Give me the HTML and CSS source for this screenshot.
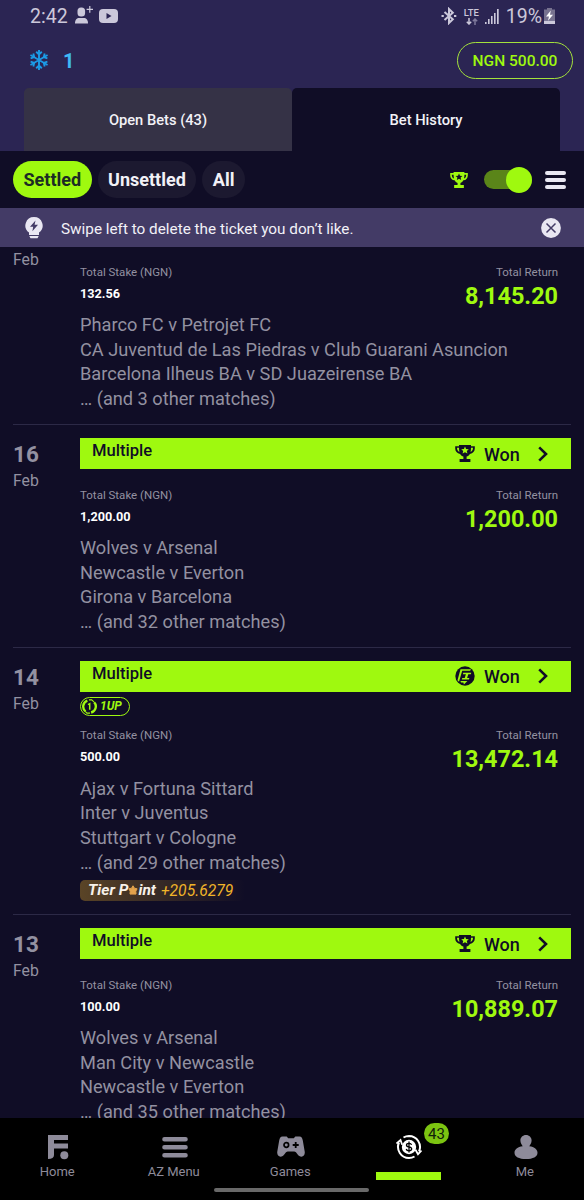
FILE: index.html
```html
<!DOCTYPE html>
<html lang="en">
  <head>
    <meta charset="UTF-8" />
    <meta name="viewport" content="width=device-width, initial-scale=1.0" />
    <title>Bet History</title>
    <link rel="stylesheet" href="styles.css">
  </head>
  <body>
    <!-- shared icons -->
    <svg class="sprite">
      <symbol id="trophy" viewBox="0 0 20 18" preserveAspectRatio="none">
        <path fill="currentColor" fill-rule="evenodd" d="M4 0h12v1.200h3.800v2.600c0 3-1.900 5.200-4.900 5.600-.9 1.600-2 2.400-3.300 2.900v2.400h3.800V18H4.600v-3.300h3.800v-2.400C7.100 11.800 6 11 5.100 9.400 2.100 9 .2 6.800.2 3.800V1.200H4zM4 3H2c0 2.100.8 3.700 2.400 4.300C4.100 6.100 4 4.400 4 3zM16 3c0 1.400-.1 3.100-.4 4.300C17.200 6.700 18 5.100 18 3zM10 1.700L8.900 4.200l-2.700.3 2 1.800-.6 2.700L10 7.600l2.400 1.400-.6-2.700 2-1.800-2.700-.3z"/>
      </symbol>
      <symbol id="arrow" viewBox="0 0 10 16">
        <path fill="none" stroke="currentColor" stroke-width="2.600" d="M1.200 1.400L8 8l-6.800 6.600"/>
      </symbol>
    </svg>

    <header class="header">
      <div class="status">
        <span class="time">2:42</span>
        <svg class="user-add" width="18" height="18" viewBox="0 0 18 18" fill="#cbc8da">
          <rect x="2.500" y="1.500" width="7.600" height="9" rx="3.500"/>
          <path d="M0 17.500c0-4 2-5.500 4-5.500h5c2 0 4 1.500 4 5.500z"/>
          <path d="M14.200 0h1.200v2.800h2.600V4h-2.600v2.800h-1.200V4h-2.600V2.800h2.600z"/>
        </svg>
        <svg class="video" width="19" height="14" viewBox="0 0 19 14">
          <rect width="19" height="14" rx="4" fill="#cbc8da"/>
          <path fill="#2b2553" d="M7.500 4l5 3-5 3z"/>
        </svg>
        <svg class="bluetooth" width="16" height="18" viewBox="0 0 16 18" fill="none" stroke="#cbc8da" stroke-width="2">
          <path d="M3.500 5l8.300 7.300L8 16V2l3.800 3.700L3.500 13"/>
          <path d="M.5 9h2.300M13 9h2.300"/>
        </svg>
        <div class="lte">
          <span>LTE</span>
          <svg width="12" height="7" viewBox="0 0 12 7" fill="none" stroke-width="1.500">
            <path stroke="#cbc8da" d="M3 0v6M.8 3.800L3 6l2.200-2.200"/>
            <path stroke="#7f7a9c" d="M9 7V1M6.800 3.200L9 1l2.200 2.200"/>
          </svg>
        </div>
        <svg class="signal" width="14" height="15" viewBox="0 0 14 15" fill="#cbc8da">
          <path d="M0 13h1.600v2H0zM3 10h1.600v5H3zM6 7h1.600v8H6zM9 4h1.600v11H9zM12 0h1.700v15H12z"/>
        </svg>
        <span class="percent">19%</span>
        <svg class="battery" width="11" height="16" viewBox="0 0 11 16">
          <path fill="#77728f" d="M3 0h5v1.500h3V12H0V1.500h3z"/>
          <path fill="#cbc8da" d="M0 12.500h11V16H0z"/>
          <path fill="#fff" d="M6.800 2.500L2 8.500h3l-1 4.300 5-6H6z"/>
        </svg>
      </div>
      <div class="account">
        <svg class="snow" width="18" height="20" viewBox="0 0 18 20" fill="none" stroke="#1c9be6" stroke-width="1.900">
          <path d="M9 0v20M.4 5l17.200 10M17.600 5L.4 15"/>
          <path d="M6.200 1.800L9 4.400l2.800-2.600M6.200 18.200L9 15.600l2.800 2.600M.6 8.300l3.600-1.100-.9-3.700M17.400 11.700l-3.600 1.100.9 3.700M17.400 8.300l-3.600-1.100.9-3.700M.6 11.700l3.600 1.100-.9 3.700"/>
        </svg>
        <span class="count">1</span>
        <span class="balance">NGN 500.00</span>
      </div>
      <div class="tabs">
        <div class="tab">Open Bets (43)</div>
        <div class="tab active">Bet History</div>
      </div>
    </header>

    <div class="filters">
      <span class="pill on">Settled</span>
      <span class="pill">Unsettled</span>
      <span class="pill">All</span>
      <svg class="cup" width="18" height="16"><use href="#trophy"/></svg>
      <div class="switch"><i></i></div>
      <div class="lines"><i></i><i></i><i></i></div>
    </div>

    <div class="tip">
      <svg width="18" height="22" viewBox="0 0 18 22">
        <path fill="#e9e7f2" d="M9 0a8.600 8.600 0 0 1 5 15.600V18H4v-2.400A8.600 8.600 0 0 1 9 0zM4.300 19h9.400l-1.200 2.200h-7z"/>
        <path fill="#433b66" d="M10.500 3.500L5 9.800h3.200l-.8 4.400 5.600-6.400H9.600z"/>
      </svg>
      <p>Swipe left to delete the ticket you don’t like.</p>
      <svg width="20" height="20" viewBox="0 0 20 20">
        <circle cx="10" cy="10" r="9.900" fill="#e9e7f2"/>
        <path stroke="#433b66" stroke-width="1.500" d="M5.500 5.500l9 9M14.500 5.500l-9 9"/>
      </svg>
    </div>

    <main class="list">
      <section class="ticket first">
        <div class="date"><span>Feb</span></div>
        <div class="detail">
          <div class="money">
            <div class="stake"><span>Total Stake (NGN)</span><b>132.56</b></div>
            <div class="return"><span>Total Return</span><b>8,145.20</b></div>
          </div>
          <ul class="matches">
            <li>Pharco FC v Petrojet FC</li>
            <li>CA Juventud de Las Piedras v Club Guarani Asuncion</li>
            <li>Barcelona Ilheus BA v SD Juazeirense BA</li>
            <li>… (and 3 other matches)</li>
          </ul>
        </div>
      </section>

      <section class="ticket">
        <div class="date"><b>16</b><span>Feb</span></div>
        <div class="detail">
          <div class="bar">
            <span class="type">Multiple</span>
            <svg class="icon" width="20" height="17"><use href="#trophy"/></svg>
            <span class="result">Won</span>
            <svg class="arrow" width="10" height="16"><use href="#arrow"/></svg>
          </div>
          <div class="money">
            <div class="stake"><span>Total Stake (NGN)</span><b>1,200.00</b></div>
            <div class="return"><span>Total Return</span><b>1,200.00</b></div>
          </div>
          <ul class="matches">
            <li>Wolves v Arsenal</li>
            <li>Newcastle v Everton</li>
            <li>Girona v Barcelona</li>
            <li>… (and 32 other matches)</li>
          </ul>
        </div>
      </section>

      <section class="ticket tall">
        <div class="date"><b>14</b><span>Feb</span></div>
        <div class="detail">
          <div class="bar">
            <span class="type">Multiple</span>
            <svg class="icon" width="20" height="20" viewBox="0 0 20 20">
              <circle cx="10" cy="10" r="9.700" fill="#100d26"/>
              <path fill="#9ff90f" d="M5.500 3.300h10.500l-.8 1.400H7.200L4 15.800l-1.500-1.600zM8.300 6.800h8l-.5 1.400h-2.500l-1.200 3.800h2.300l-.5 1.400H6.800l.5-1.400h2.400l1.200-3.800H7.900zM5.400 15h7l-3.500 3.500-.5-2H6z"/>
            </svg>
            <span class="result">Won</span>
            <svg class="arrow" width="10" height="16"><use href="#arrow"/></svg>
          </div>
          <div class="oneup">
            <svg width="15" height="15" viewBox="0 0 14 14" fill="none" stroke="#9ff90f">
              <path stroke-width="2.200" d="M5 1.500A5.800 5.800 0 0 0 3.300 11.500M8.500 12.600A5.800 5.800 0 0 0 11.300 3"/>
              <path stroke-width="1" d="M6.500.8h2.600l2 1.800M7.500 13.200H4.600L3 11.500"/>
              <path stroke-width="1.400" d="M5.600 5.300L7.200 4.400V10"/>
            </svg>
            <span>1UP</span>
          </div>
          <div class="money">
            <div class="stake"><span>Total Stake (NGN)</span><b>500.00</b></div>
            <div class="return"><span>Total Return</span><b>13,472.14</b></div>
          </div>
          <ul class="matches">
            <li>Ajax v Fortuna Sittard</li>
            <li>Inter v Juventus</li>
            <li>Stuttgart v Cologne</li>
            <li>… (and 29 other matches)</li>
          </ul>
          <div class="points">
            <b>Tier P<svg width="10" height="10" viewBox="0 0 10 10"><path fill="#e2a24c" stroke="#e2a24c" stroke-linejoin="round" d="M5 .8l1.400 2.400 2.700.6-1.300 2.400.2 2.900H2l.2-2.900L.9 3.800l2.700-.6z"/></svg>int</b>
            <span>+205.6279</span>
          </div>
        </div>
      </section>

      <section class="ticket">
        <div class="date"><b>13</b><span>Feb</span></div>
        <div class="detail">
          <div class="bar">
            <span class="type">Multiple</span>
            <svg class="icon" width="20" height="17"><use href="#trophy"/></svg>
            <span class="result">Won</span>
            <svg class="arrow" width="10" height="16"><use href="#arrow"/></svg>
          </div>
          <div class="money">
            <div class="stake"><span>Total Stake (NGN)</span><b>100.00</b></div>
            <div class="return"><span>Total Return</span><b>10,889.07</b></div>
          </div>
          <ul class="matches">
            <li>Wolves v Arsenal</li>
            <li>Man City v Newcastle</li>
            <li>Newcastle v Everton</li>
            <li>… (and 35 other matches)</li>
          </ul>
        </div>
      </section>
    </main>

    <nav class="nav">
      <div class="item">
        <svg width="22" height="26" viewBox="0 0 22 26" fill="#8e8b9a">
          <path d="M1 1h20v5H7v3.500h14v5H7V21c0 2.500-2 4-6 4z"/>
          <circle cx="17.300" cy="21.300" r="4"/>
        </svg>
        <span>Home</span>
      </div>
      <div class="item">
        <svg width="26" height="26" viewBox="0 0 26 26" stroke="#8e8b9a" stroke-width="4.600" stroke-linecap="round">
          <path d="M2.500 5.300h21M2.500 13.300h21M2.500 21.300h21"/>
        </svg>
        <span>AZ Menu</span>
      </div>
      <div class="item">
        <svg width="28" height="26" viewBox="0 0 28 26">
          <path fill="#8e8b9a" d="M5.500 2.500h4.200l1.500 1.700h5.600l1.500-1.700h4.200c2 0 2.700 1.500 3.300 4l1.900 11c.7 4-2.400 6.600-5.400 4.500-2-1.500-3.100-4.500-5-4.500h-6.600c-1.900 0-3 3-5 4.500-3 2.100-6.100-.5-5.400-4.500l1.900-11c.6-2.500 1.300-4 3.300-4z"/>
          <circle cx="9.300" cy="11" r="2.300" fill="none" stroke="#000" stroke-width="1.700"/>
          <path stroke="#000" stroke-width="1.800" d="M18.700 8v6M15.700 11h6"/>
        </svg>
        <span>Games</span>
      </div>
      <div class="item current">
        <svg width="26" height="26" viewBox="0 0 26 26" fill="none" stroke="#fff">
          <circle cx="13" cy="13" r="7.200" fill="#fff" stroke="none"/>
          <path stroke-width="2" d="M13 24A11 11 0 0 1 3 8.500M7.500 3.500A11 11 0 0 1 13 2M13 2A11 11 0 0 1 23 17.500M18.500 22.500A11 11 0 0 1 13 24"/>
          <path stroke-width="1.800" d="M.5 9.500L4.500 6l1.700 4.700M25.500 16.500L22 20.200l-2.500-4.400"/>
          <path stroke="#000" stroke-width="1.300" d="M15.600 10.900c-.4-1.100-1.300-1.500-2.600-1.500-3.300 0-3.300 3-.3 3.500 4.200.6 3.600 3.900.3 3.900-1.500 0-2.500-.6-2.800-1.800M13 7.600v11"/>
        </svg>
        <em class="badge">43</em>
      </div>
      <div class="item">
        <svg width="24" height="26" viewBox="0 0 24 26" fill="#8e8b9a">
          <path d="M12 1c3.200 0 5.600 2.400 5.600 5.500 0 2.600-1.400 4.200-2.300 5.700 5.200.6 8.200 3.400 8.200 6.500 0 4-4.500 6.300-11.500 6.300S.5 22.700.5 18.700c0-3.100 3-5.900 8.200-6.500-.9-1.500-2.300-3.100-2.300-5.700C6.400 3.400 8.800 1 12 1z"/>
        </svg>
        <span>Me</span>
      </div>
      <div class="handle"></div>
    </nav>
  </body>
</html>
```
FILE: styles.css
```css
* {
  box-sizing: border-box;
}
body {
  width: 584px;
  height: 1200px;
  margin: 0;
  overflow: hidden;
  display: flex;
  flex-direction: column;
  background-color: #100d26;
  color: #f2f1f7;
  font-family: Roboto, sans-serif;
}
svg {
  display: block;
  flex: none;
}
.sprite {
  width: 0;
  height: 0;
  position: absolute;
}

/* header */
.header {
  height: 151px;
  flex: none;
  background-color: #2b2553;
}
.status {
  height: 32px;
  padding: 0 29px 0 30px;
  display: flex;
  align-items: center;
  color: #cbc8da;
}
.time,
.percent {
  font-size: 19.500px;
  line-height: 32px;
  padding-top: 1px;
}
.user-add {
  margin: -3px 0 0 7px;
}
.video {
  margin-left: 6px;
}
.bluetooth {
  margin-left: auto;
}
.lte {
  margin-left: 7px;
  width: 16px;
  font-size: 9.500px;
  font-weight: 500;
  line-height: 10px;
}
.lte svg {
  margin-left: 2px;
}
.signal {
  margin-left: 5px;
}
.percent {
  margin-left: 7px;
}
.battery {
  margin-left: 2px;
}
.account {
  height: 56px;
  padding: 0 11px 0 30px;
  display: flex;
  align-items: center;
}
.count {
  margin: 1px 0 0 15px;
  color: #3fb9f5;
  font-size: 20px;
  font-weight: 700;
}
.balance {
  width: 116px;
  height: 37px;
  margin-left: auto;
  border: 1.500px solid #a4e23c;
  border-radius: 19px;
  color: #9ff90f;
  font-size: 15.500px;
  font-weight: 500;
  line-height: 37px;
  text-align: center;
}
.tabs {
  height: 63px;
  margin: 0 24px;
  display: flex;
}
.tab {
  width: 268px;
  border-radius: 5px 5px 0 0;
  background-color: #353246;
  font-size: 14.700px;
  font-weight: 500;
  line-height: 65px;
  text-align: center;
}
.tab.active {
  background-color: #100d26;
}

/* filters */
.filters {
  height: 57px;
  flex: none;
  padding: 0 18px 0 13px;
  display: flex;
  align-items: center;
}
.pill {
  height: 37px;
  margin-right: 6px;
  padding: 0 10.500px;
  border-radius: 19px;
  background-color: #1c1930;
  font-size: 18px;
  font-weight: 700;
  line-height: 38px;
}
.pill.on {
  background-color: #9ff90f;
  color: #1c2b25;
}
.cup {
  margin-left: auto;
  color: #9ff90f;
}
.switch {
  width: 48px;
  height: 19px;
  margin: 0 13px 0 16px;
  display: flex;
  align-items: center;
  justify-content: flex-end;
  border-radius: 10px;
  background-color: #5a8519;
}
.switch i {
  width: 26px;
  height: 26px;
  flex: none;
  border-radius: 50%;
  background-color: #9ff90f;
}
.lines {
  width: 21px;
  display: flex;
  flex-direction: column;
  gap: 3px;
}
.lines i {
  height: 4px;
  border-radius: 2px;
  background-color: #e9e7f2;
}

/* swipe tip */
.tip {
  height: 39px;
  flex: none;
  padding: 0 23px 0 25px;
  display: flex;
  align-items: center;
  background-color: #433b66;
}
.tip p {
  margin: 2px auto 0 18px;
  font-size: 15.300px;
}

/* tickets */
.list {
  height: 871px;
  flex: none;
  padding: 0 13px;
  overflow: hidden;
  color: #9391a1;
}
.ticket {
  height: 222.500px;
  padding-top: 13px;
  display: flex;
  border-top: 1px solid #2c2946;
}
.ticket.tall {
  height: 267.500px;
}
/* scrolled half under the tip */
.ticket.first {
  height: 177px;
  padding-top: 0;
  border-top: 0;
}
.first .date {
  padding-top: 2px;
}
.first .money {
  height: 66px;
  padding-top: 17px;
}
.date {
  width: 67px;
  flex: none;
}
.date b,
.date span {
  display: block;
}
.date b {
  font-size: 22.500px;
  line-height: 32px;
}
.date span {
  font-size: 15.800px;
  line-height: 21px;
}
.detail {
  flex: 1;
}
.bar {
  height: 31px;
  padding: 0 23px 0 12px;
  display: flex;
  align-items: center;
  background-color: #9ff90f;
  color: #100d26;
  font-size: 16.600px;
  font-weight: 500;
}
.type {
  margin: -6px auto 0 0;
}
.result {
  width: 54px;
  margin-left: 9px;
  padding-top: 1px;
  font-size: 18px;
}
.money {
  height: 67px;
  padding: 17.500px 13px 0 0;
  display: flex;
  justify-content: space-between;
}
.money span,
.money b {
  display: block;
}
.money span {
  font-size: 11.500px;
  line-height: 16px;
}
.stake b {
  padding-top: 5px;
  color: #fff;
  font-size: 12.700px;
  line-height: 18px;
}
.return {
  text-align: right;
}
.return b {
  color: #9ff90f;
  font-size: 23.400px;
  line-height: 32px;
}
.matches {
  margin: 0;
  padding: 0;
  list-style: none;
  font-size: 18.200px;
  line-height: 24.670px;
}
.oneup {
  width: 50px;
  height: 19px;
  margin: 5px 0 -6px;
  padding-left: 1px;
  display: flex;
  align-items: center;
  gap: 3px;
  border: 1px solid #9ff90f;
  border-radius: 10px;
  color: #9ff90f;
  font-size: 12px;
  font-style: italic;
  font-weight: 700;
}
.points {
  width: 165px;
  height: 21px;
  margin-top: 4.500px;
  padding-left: 8px;
  display: flex;
  align-items: center;
  gap: 5px;
  border-radius: 5px;
  background: linear-gradient(90deg, #5a4426, #100d26);
  color: #f0b429;
  font-size: 15.700px;
  font-style: italic;
}
.points b {
  color: #f7f1ea;
  font-size: 15.500px;
}
.points svg {
  display: inline-block;
}

/* bottom nav */
.nav {
  height: 82px;
  flex: none;
  position: relative;
  display: flex;
  background-color: #000;
  color: #8e8b9a;
}
.item {
  width: 116.500px;
  padding-top: 16px;
  display: flex;
  flex-direction: column;
  align-items: center;
  position: relative;
  font-size: 13px;
  line-height: 24px;
}
.item span {
  margin-left: -2px;
}
.current {
  width: 65px;
  height: 62px;
  margin: 0 26.500px;
  border-bottom: 8px solid #9ff90f;
}
.badge {
  position: absolute;
  top: 5px;
  left: 48px;
  width: 25px;
  height: 21px;
  border-radius: 11px;
  background-color: #7cc411;
  color: #10200a;
  font-size: 15px;
  font-style: normal;
  line-height: 22px;
  text-align: center;
}
.handle {
  position: absolute;
  left: 214px;
  bottom: 8px;
  width: 155px;
  height: 4px;
  border-radius: 2px;
  background-color: #696969;
}
```
